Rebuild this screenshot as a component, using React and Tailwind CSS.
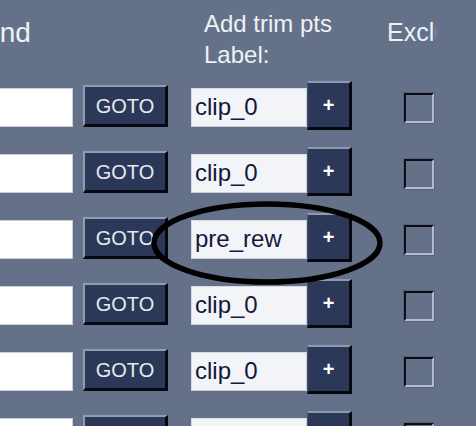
import React from "react";

const rows = ["clip_0", "clip_0", "pre_rew", "clip_0", "clip_0", "clip_0"];

const Row = ({ label }) => {
  return (
    <div className="flex items-center h-[66px] shrink-0">
      {/* end time box, cut off at the left edge */}
      <div className="w-[73px] h-[39px] bg-white border-y border-r border-[#c9ced8] shrink-0"></div>

      <button className="ml-[10px] w-[85px] h-[42px] shrink-0 bg-[#2b3858] border-t-2 border-l-2 border-b-[3px] border-r-[3px] border-t-[#909cb0] border-l-[#909cb0] border-b-[#05080f] border-r-[#05080f] text-[20px] text-[#e6e9f0] leading-none -mt-[2px]">
        GOTO
      </button>

      <div className="ml-[23px] flex items-center shrink-0">
        <input
          readOnly
          value={label}
          className="w-[116px] h-[39px] bg-[#f2f4f8] border border-t-[#d8dce4] border-l-[#d8dce4] border-b-[#c8ccd6] border-r-[#c8ccd6] pl-[3px] text-[24px] text-[#141838] outline-none"
        />
        <button className="w-[45px] h-[49px] -mt-[4px] bg-[#2b3858] border-t-2 border-l border-b-[3px] border-r-[3px] border-t-[#8e9ab0] border-l-[#4a5670] border-b-[#05080f] border-r-[#05080f] text-[20px] font-bold text-white leading-none">
          +
        </button>
      </div>

      <div className="ml-[52px] w-[30px] h-[30px] shrink-0 border-t-2 border-l-2 border-b-2 border-r-2 border-t-[#0c0e14] border-l-[#0c0e14] border-b-[#b4bccb] border-r-[#b4bccb] outline outline-1 outline-[#57627a] -outline-offset-[0px] mt-[2px]"></div>
    </div>
  );
};

const App = () => {
  return (
    <div
      className="relative w-[476px] h-[426px] overflow-hidden bg-[#647189] text-[#eef1f6]"
      style={{ fontFamily: '"Liberation Sans", Arial, sans-serif' }}
    >
      {/* header */}
      <div className="flex h-[74px]">
        <div className="w-[73px] pt-[19px] shrink-0 overflow-hidden">
          <p className="text-[28px] leading-[28px] -ml-[19px] whitespace-nowrap">End</p>
        </div>
        <div className="ml-[10px] w-[85px] shrink-0"></div>
        <div className="ml-[23px] w-[161px] pt-[8px] pl-[13px] shrink-0">
          <p className="text-[24px] leading-[31px] whitespace-nowrap">Add trim pts</p>
          <p className="text-[24px] leading-[31px]">Label:</p>
        </div>
        <div className="ml-[35px] w-[49px] pt-[20px] shrink-0 overflow-hidden">
          <p className="text-[25px] leading-[25px] whitespace-nowrap">Exclude</p>
        </div>
      </div>

      {/* rows */}
      <div className="flex flex-col">
        {rows.map((label, i) => (
          <Row key={i} label={label} />
        ))}
      </div>

      {/* hand-drawn highlight */}
      <svg
        className="absolute left-[150px] top-[200px] pointer-events-none"
        width="236"
        height="88"
        viewBox="0 0 236 88"
      >
        <ellipse cx="117" cy="43" rx="113" ry="39" fill="none" stroke="#000" strokeWidth="5.5" />
      </svg>
    </div>
  );
};

export default App;
